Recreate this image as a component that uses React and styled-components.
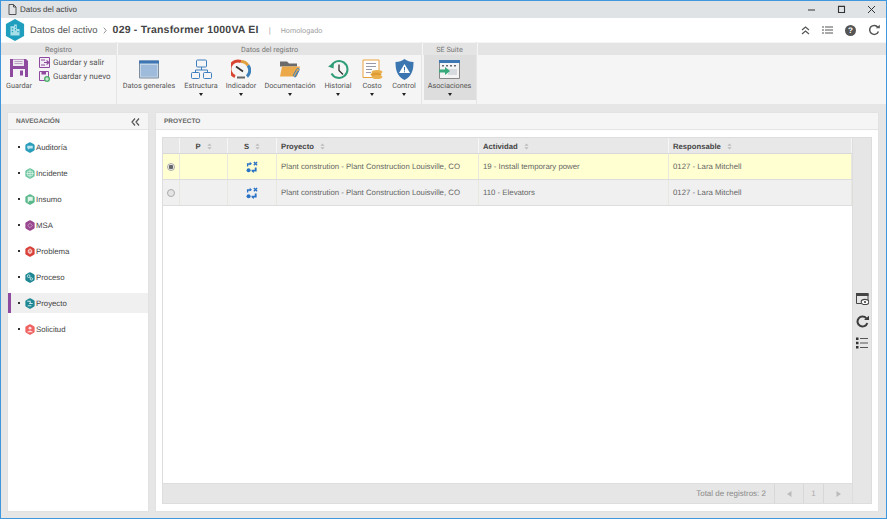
import React from 'react';
import styled, { createGlobalStyle } from 'styled-components';

const GlobalStyle = createGlobalStyle`
  html, body {
    margin: 0;
    padding: 0;
    height: 100%;
    overflow: hidden;
  }
  body {
    font-family: "Liberation Sans", Arial, sans-serif;
    text-rendering: geometricPrecision;
  }
  * {
    box-sizing: border-box;
  }
`;

const navItems = [
  { name: 'Auditoría', color: '#2a9dbb', glyph: 'audit' },
  { name: 'Incidente', color: '#6cc6a0', glyph: 'cross' },
  { name: 'Insumo', color: '#5bb98c', glyph: 'bubble' },
  { name: 'MSA', color: '#99478f', glyph: 'dots' },
  { name: 'Problema', color: '#d9403a', glyph: 'alert' },
  { name: 'Proceso', color: '#1f8793', glyph: 'keys' },
  { name: 'Proyecto', color: '#1f8793', glyph: 'steps', active: true },
  { name: 'Solicitud', color: '#ef6463', glyph: 'person' },
];

const rows = [
  { activity: '19 - Install temporary power', selected: true },
  { activity: '110 - Elevators', selected: false },
];

function Sort() {
  return (
    <SortIcon viewBox="0 0 6 8">
      <path d="M3 0.5 L5.5 3 H0.5 Z M3 7.5 L5.5 5 H0.5 Z" fill="#bbbbbb" />
    </SortIcon>
  );
}

function NavGlyph({ color, glyph }) {
  return (
    <svg width="10" height="11" viewBox="0 0 11 12">
      <path d="M5.5 0.3 Q6 0.3 6.5 0.6 L9.8 2.4 Q10.6 2.9 10.6 3.6 V8.4 Q10.6 9.1 9.8 9.6 L6.5 11.4 Q5.5 11.9 4.5 11.4 L1.2 9.6 Q0.4 9.1 0.4 8.4 V3.6 Q0.4 2.9 1.2 2.4 L4.5 0.6 Q5 0.3 5.5 0.3 Z" fill={color} />
      {glyph === 'audit' && <path d="M2.5 4 H8.5 V7 H5 L3.5 8.5 V7 H2.5 Z" fill="#bfe6f0" />}
      {glyph === 'cross' && <path d="M5.5 1.5 V10.5 M1.5 6 H9.5 M3 3.5 H8 V8.5 H3 Z" stroke="#e7f7ef" fill="none" strokeWidth="0.8" />}
      {glyph === 'bubble' && <path d="M3 3 H8.5 V7.5 H5 L3 9.5 Z" fill="#dff5ea" />}
      {glyph === 'dots' && <path d="M3 6 L5.5 3.5 L8 6 L5.5 8.5 Z" stroke="#d9b7d5" fill="none" strokeWidth="0.8" />}
      {glyph === 'alert' && <path d="M5.5 2.5 L8 4.5 V7 L5.5 9 L3 7 V4.5 Z M5 4 V6.5 H6 V4 Z" fill="#f4c4c1" fillRule="evenodd" />}
      {glyph === 'keys' && (
        <g stroke="#d4eef0" fill="none" strokeWidth="0.9">
          <circle cx="4" cy="4.5" r="1.5" />
          <circle cx="7" cy="7.5" r="1.3" />
          <path d="M5 5.5 L6 6.5" />
        </g>
      )}
      {glyph === 'steps' && <path d="M2.5 3.5 H6.5 M4.5 6 H8.5 M3 8.5 H7 M5 3.5 L6.5 6" stroke="#d4eef0" fill="none" strokeWidth="1" />}
      {glyph === 'person' && (
        <g fill="#ffdcdc">
          <circle cx="5.5" cy="4.5" r="1.6" />
          <path d="M2.5 9 C3 6.8 8 6.8 8.5 9 Z" />
        </g>
      )}
    </svg>
  );
}

function ProjectStatus() {
  return (
    <svg width="12" height="12" viewBox="0 0 13 13">
      <g fill="#2a72c6">
        <path d="M1 6 V2.5 H4 V0.8 L6.5 3 L4 5 V4 H2.5 V6 Z" />
        <circle cx="2.8" cy="10" r="2.2" />
        <path d="M6 9.5 H9.5 V7 H11.5 V11.5 H8.5 V13 L6 11 Z" />
      </g>
      <path d="M8.5 1 L12 4.5 M12 1 L8.5 4.5" stroke="#2a72c6" strokeWidth="1.5" />
    </svg>
  );
}

const Caret = () => <CaretMark />;

export default function App() {
  return (
    <Frame>
      <GlobalStyle />
      <TitleBar>
        <TitleLeft>
          <svg width="9" height="11" viewBox="0 0 9 11">
            <path d="M1 .5 H5.5 L8 3 V10.5 H1 Z M5.5 .5 V3 H8" fill="none" stroke="#444" strokeWidth="0.9" />
          </svg>
          <TitleText>Datos del activo</TitleText>
        </TitleLeft>
        <WindowButtons>
          <svg width="9" height="9" viewBox="0 0 9 9"><path d="M1 5 H8" stroke="#333" strokeWidth="1" /></svg>
          <svg width="9" height="9" viewBox="0 0 9 9"><path d="M1.5 1.5 H7.5 V7.5 H1.5 Z M1 1.2 H8" fill="none" stroke="#333" strokeWidth="1.1" /></svg>
          <svg width="9" height="9" viewBox="0 0 9 9"><path d="M1 1 L8 8 M8 1 L1 8" stroke="#333" strokeWidth="1" /></svg>
        </WindowButtons>
      </TitleBar>

      <Header>
        <Logo>
          <svg width="20" height="22" viewBox="0 0 22 24">
            <path d="M11 0 L21 5.5 V18.5 L11 24 L1 18.5 V5.5 Z" fill="#1f9fbd" />
            <path d="M6 18 V8 H10 V6 H13 V11 H16 V18 Z" fill="#a9dfe9" />
            <path d="M7.5 10 H9 V11.5 H7.5 Z M7.5 13 H9 V14.5 H7.5 Z M11 8 H12 V9.5 H11 Z M11 11 H12 V12.5 H11 Z M13.5 13 H15 V14.5 H13.5 Z" fill="#1f9fbd" />
          </svg>
        </Logo>
        <Crumb>Datos del activo</Crumb>
        <Chevron viewBox="0 0 5 8" width="4" height="7">
          <path d="M1 .5 L4 4 L1 7.5" fill="none" stroke="#777" strokeWidth="1" />
        </Chevron>
        <RecordTitle>029 - Transformer 1000VA EI</RecordTitle>
        <Divider>|</Divider>
        <Status>Homologado</Status>
        <HeaderTools>
          <svg width="9" height="9" viewBox="0 0 9 9">
            <path d="M1 4 L4.5 1 L8 4 M1 8 L4.5 5 L8 8" fill="none" stroke="#555" strokeWidth="1.2" />
          </svg>
          <svg width="11" height="8" viewBox="0 0 11 8">
            <path d="M3 1 H11 M3 4 H11 M3 7 H11" stroke="#555" strokeWidth="1" />
            <path d="M0 1 H2 M0 4 H2 M0 7 H2" stroke="#555" strokeWidth="1.2" />
          </svg>
          <HelpBadge>?</HelpBadge>
          <svg width="12" height="12" viewBox="0 0 12 12">
            <path d="M9.8 3.2 A4.5 4.5 0 1 0 10.4 7.5" fill="none" stroke="#555" strokeWidth="1.5" />
            <path d="M7.8 4.2 H11.8 V0.8 Z" fill="#555" />
          </svg>
        </HeaderTools>
      </Header>

      <Ribbon>
        <RibbonGroup $width={115}>
          <GroupTitle>Registro</GroupTitle>
          <RegistroBody>
            <SaveButton>
              <svg width="20" height="20" viewBox="0 0 20 20">
                <path d="M1 1 H17 L19 3 V19 H1 Z" fill="#8e4a9e" />
                <path d="M4 1.5 H15 V8 H4 Z" fill="#ece6ee" />
                <path d="M5.5 3.5 H13.5 M5.5 5.5 H13.5" stroke="#b9a0c2" strokeWidth="1" />
                <path d="M4 11 H16 V19 H4 Z" fill="#f5f2f6" />
                <path d="M11 12.5 H14 V17.5 H11 Z" fill="#8e4a9e" />
              </svg>
              <RibbonLabel>Guardar</RibbonLabel>
            </SaveButton>
            <SaveOptions>
              <SaveOption>
                <svg width="11" height="11" viewBox="0 0 11 11">
                  <path d="M.5 .5 H10.5 V10.5 H.5 Z" fill="#f3eef5" stroke="#8e4a9e" />
                  <path d="M2 3 H6 M5 5.5 H10 M7.5 3.5 L10 5.5 L7.5 7.5 M2 8 H6" fill="none" stroke="#8e4a9e" strokeWidth="1.1" />
                </svg>
                <RibbonLabel $size={8}>Guardar y salir</RibbonLabel>
              </SaveOption>
              <SaveOption>
                <svg width="11" height="11" viewBox="0 0 11 11">
                  <path d="M.5 .5 H9.5 V9.5 H.5 Z" fill="#f3eef5" stroke="#8e4a9e" />
                  <path d="M2.5 .5 H7 V3.5 H2.5 Z" fill="#8e4a9e" />
                  <circle cx="8" cy="8" r="3" fill="#4caf6a" />
                  <path d="M8 6.2 V9.8 M6.2 8 H9.8" stroke="#fff" strokeWidth="0.9" />
                </svg>
                <RibbonLabel $size={8}>Guardar y nuevo</RibbonLabel>
              </SaveOption>
            </SaveOptions>
          </RegistroBody>
        </RibbonGroup>

        <RibbonGroup $width={303}>
          <GroupTitle>Datos del registro</GroupTitle>
          <GroupBody>
            <RibbonButton $width={56}>
              <svg width="20" height="18" viewBox="0 0 20 18">
                <path d="M.5 .5 H19.5 V17.5 H.5 Z" fill="#c4d5e8" stroke="#7d8e9e" />
                <path d="M0 0 H20 V3 H0 Z" fill="#3d76b3" />
                <path d="M2 4.5 H18 V16 H2 Z" fill="#9fbbdb" />
              </svg>
              <RibbonLabel>Datos generales</RibbonLabel>
            </RibbonButton>
            <RibbonButton $width={48}>
              <svg width="21" height="20" viewBox="0 0 21 20">
                <g fill="none" stroke="#3d7fc1" strokeWidth="1">
                  <rect x="5.5" y=".5" width="10" height="7" rx="1" />
                  <rect x=".5" y="13" width="8" height="6" rx="1" />
                  <rect x="12.5" y="13" width="8" height="6" rx="1" />
                  <path d="M10.5 7.5 V10.5 M4.5 13 V10.5 H16.5 V13" />
                </g>
              </svg>
              <RibbonLabel>Estructura</RibbonLabel>
              <Caret />
            </RibbonButton>
            <RibbonButton $width={32}>
              <svg width="20" height="20" viewBox="0 0 20 20">
                <path d="M4 17 A8 8 0 0 1 10 2" fill="none" stroke="#d8442f" strokeWidth="3" />
                <path d="M10 2 A8 8 0 0 1 17 6" fill="none" stroke="#e0a040" strokeWidth="3" />
                <path d="M17 6 A8 8 0 0 1 16 17" fill="none" stroke="#3d7fb8" strokeWidth="3" />
                <path d="M5 7 L12 12" stroke="#333" strokeWidth="1.6" />
                <path d="M6 17 H14 V19 H6 Z" fill="#666" />
              </svg>
              <RibbonLabel>Indicador</RibbonLabel>
              <Caret />
            </RibbonButton>
            <RibbonButton $width={66}>
              <svg width="21" height="20" viewBox="0 0 21 20">
                <path d="M0 2 H7 L9 4 H17 V7 H0 Z" fill="#6b6b6b" />
                <path d="M0 17 L2 7 H20 L17 17 Z" fill="#eba94a" />
                <path d="M15 18 L19 11 C20 9 17.5 8 16.5 10 L13.5 15.5 C13 17 15 17.5 15.5 16 L18 11.5" fill="none" stroke="#3d7fc1" strokeWidth="1" />
              </svg>
              <RibbonLabel>Documentación</RibbonLabel>
              <Caret />
            </RibbonButton>
            <RibbonButton $width={30}>
              <svg width="21" height="20" viewBox="0 0 21 20">
                <path d="M3 7 A8.5 8.5 0 1 1 3.5 14" fill="none" stroke="#2f9e77" strokeWidth="2" />
                <path d="M0 7 L5.5 9 L6 3 Z" fill="#2f9e77" />
                <path d="M11 5 V11 L15 15" fill="none" stroke="#333" strokeWidth="1.3" />
              </svg>
              <RibbonLabel>Historial</RibbonLabel>
              <Caret />
            </RibbonButton>
            <RibbonButton $width={38}>
              <svg width="21" height="20" viewBox="0 0 21 20">
                <path d="M1 .5 H17 V18 H1 Z" fill="#fff" stroke="#e8a23c" />
                <path d="M4 4 H14 M4 7 H14 M4 10 H10 M4 13 H9" stroke="#99a" strokeWidth="1" />
                <ellipse cx="15" cy="12.5" rx="5.5" ry="2" fill="#eab04d" />
                <ellipse cx="14" cy="15" rx="5.5" ry="2" fill="#e09c34" />
                <ellipse cx="15" cy="17.5" rx="5.5" ry="2" fill="#eab04d" />
              </svg>
              <RibbonLabel>Costo</RibbonLabel>
              <Caret />
            </RibbonButton>
            <RibbonButton $width={26}>
              <svg width="19" height="21" viewBox="0 0 19 21">
                <path d="M9.5 0 C12 2 15 3 18.5 3 C18.5 11 17 17 9.5 21 C2 17 .5 11 .5 3 C4 3 7 2 9.5 0 Z" fill="#3c76b0" />
                <path d="M9.5 5 L15 14 H4 Z" fill="#fff" />
                <path d="M9 8 H10 V11.5 H9 Z M9 12.3 H10 V13.3 H9 Z" fill="#3c76b0" />
              </svg>
              <RibbonLabel>Control</RibbonLabel>
              <Caret />
            </RibbonButton>
          </GroupBody>
        </RibbonGroup>

        <RibbonGroup $width={53}>
          <GroupTitle>SE Suite</GroupTitle>
          <SuiteBody>
            <RibbonButton $width={52} $active>
              <svg width="21" height="19" viewBox="0 0 21 19">
                <path d="M.5 .5 H20.5 V18.5 H.5 Z" fill="#f4f4f4" stroke="#888" />
                <path d="M0 0 H21 V3 H0 Z" fill="#3d76b3" />
                <path d="M3 5 H5 V6.5 H3 Z M7 5 H9 V6.5 H7 Z M11 5 H13 V6.5 H11 Z M15 5 H17 V6.5 H15 Z" fill="#667" />
                <path d="M9 9 H18 V15 H9 Z" fill="#d6dbe0" />
                <path d="M0 9.5 H6 V7 L11 11 L6 15 V12.5 H0 Z" fill="#38a97a" />
              </svg>
              <RibbonLabel>Asociaciones</RibbonLabel>
              <Caret />
            </RibbonButton>
          </SuiteBody>
        </RibbonGroup>

        <RibbonFill>
          <GroupTitle />
        </RibbonFill>
      </Ribbon>

      <Workspace>
        <NavPanel>
          <PanelHeader>
            <span>NAVEGACIÓN</span>
            <svg width="9" height="8" viewBox="0 0 9 8">
              <path d="M4 .5 L1 4 L4 7.5 M8 .5 L5 4 L8 7.5" fill="none" stroke="#555" strokeWidth="1.2" />
            </svg>
          </PanelHeader>
          <NavList>
            {navItems.map((item) => (
              <NavItem key={item.name} $active={item.active}>
                <Bullet />
                <NavGlyph color={item.color} glyph={item.glyph} />
                <NavLabel>{item.name}</NavLabel>
              </NavItem>
            ))}
          </NavList>
        </NavPanel>

        <MainPanel>
          <PanelHeader>
            <span>PROYECTO</span>
          </PanelHeader>
          <GridWrap>
            <GridArea>
              <Table>
                <HeadRow>
                  <HeadCell $width={17} />
                  <HeadCell $width={48} $center>P<Sort /></HeadCell>
                  <HeadCell $width={49} $center>S<Sort /></HeadCell>
                  <HeadCell $width={202}>Proyecto<Sort /></HeadCell>
                  <HeadCell $width={190}>Actividad<Sort /></HeadCell>
                  <HeadCell $flex>Responsable<Sort /></HeadCell>
                </HeadRow>
                {rows.map((row) => (
                  <DataRow key={row.activity} $selected={row.selected}>
                    <Cell $width={17} $center><Radio $checked={row.selected} /></Cell>
                    <Cell $width={48} />
                    <Cell $width={49} $center><ProjectStatus /></Cell>
                    <Cell $width={202}>Plant constrution - Plant Construction Louisville, CO</Cell>
                    <Cell $width={190}>{row.activity}</Cell>
                    <Cell $flex>0127 - Lara Mitchell</Cell>
                  </DataRow>
                ))}
              </Table>
              <Footer>
                <Total>Total de registros: 2</Total>
                <Pager>
                  <svg width="5" height="6" viewBox="0 0 5 6"><path d="M4.5 0 V6 L0 3 Z" fill="#bbb" /></svg>
                </Pager>
                <Pager $narrow>1</Pager>
                <Pager>
                  <svg width="5" height="6" viewBox="0 0 5 6"><path d="M.5 0 V6 L5 3 Z" fill="#bbb" /></svg>
                </Pager>
              </Footer>
            </GridArea>
            <SideTools>
              <svg width="13" height="12" viewBox="0 0 13 12">
                <path d="M.5 .5 H12 V8 M.5 .5 V10.5 H5" fill="none" stroke="#444" strokeWidth="1" />
                <path d="M0 0 H12.5 V3 H0 Z" fill="#444" />
                <ellipse cx="9" cy="9" rx="3.8" ry="2.6" fill="#fff" stroke="#444" strokeWidth="1.1" />
                <circle cx="9" cy="9" r="1.1" fill="#444" />
              </svg>
              <svg width="13" height="13" viewBox="0 0 13 13">
                <path d="M10.4 3.4 A5 5 0 1 0 11.3 8" fill="none" stroke="#3c3c3c" strokeWidth="2" />
                <path d="M8 5 H13 V0.8 Z" fill="#3c3c3c" />
              </svg>
              <svg width="12" height="12" viewBox="0 0 12 12">
                <path d="M4 1.5 H12 M4 6 H12 M4 10.5 H12" stroke="#555" strokeWidth="1" />
                <path d="M0 .5 H2.5 V3 H0 Z M0 4.8 H2.5 V7.3 H0 Z M0 9 H2.5 V11.5 H0 Z" fill="#333" />
              </svg>
            </SideTools>
          </GridWrap>
        </MainPanel>
      </Workspace>
    </Frame>
  );
}

const Frame = styled.div`
  width: 887px;
  height: 519px;
  display: flex;
  flex-direction: column;
  border: 1px solid #3f97de;
  background: #e6e6e6;
  overflow: hidden;
`;

const TitleBar = styled.div`
  height: 17px;
  flex: none;
  display: flex;
  align-items: center;
  justify-content: space-between;
  padding-left: 7px;
  background: #dfe3e6;
`;

const TitleLeft = styled.div`
  display: flex;
  align-items: center;
  gap: 3px;
`;

const TitleText = styled.span`
  font-size: 8px;
  color: #3a3a3a;
`;

const WindowButtons = styled.div`
  display: flex;
  align-items: center;
  gap: 21px;
  padding-right: 10px;
`;

const Header = styled.div`
  height: 24px;
  flex: none;
  display: flex;
  align-items: center;
  padding-left: 4px;
  background: #ffffff;
`;

const Logo = styled.div`
  width: 25px;
  display: flex;
`;

const Crumb = styled.span`
  font-size: 9.5px;
  color: #555555;
`;

const Chevron = styled.svg`
  margin: 0 6px 0 5px;
`;

const RecordTitle = styled.span`
  font-size: 10.5px;
  font-weight: bold;
  letter-spacing: 0.2px;
  color: #444444;
`;

const Divider = styled.span`
  margin: 0 10px;
  font-size: 8px;
  color: #aaaaaa;
`;

const Status = styled.span`
  font-family: Roboto, sans-serif;
  font-size: 7.2px;
  color: #a0a0a0;
`;

const HeaderTools = styled.div`
  margin-left: auto;
  display: flex;
  align-items: center;
  gap: 12px;
  padding-right: 6px;
`;

const HelpBadge = styled.span`
  width: 11px;
  height: 11px;
  display: flex;
  align-items: center;
  justify-content: center;
  border-radius: 50%;
  background: #555555;
  color: #ffffff;
  font-size: 8px;
  font-weight: bold;
`;

const Ribbon = styled.div`
  height: 62px;
  flex: none;
  display: flex;
  gap: 2px;
  background: #f5f5f5;
`;

const RibbonGroup = styled.div`
  width: ${(p) => p.$width}px;
  flex: none;
  display: flex;
  flex-direction: column;
  height: 100%;
  box-shadow: 1px 0 0 #e6e6e6;
`;

const RibbonFill = styled.div`
  flex: 1;
`;

const GroupTitle = styled.div`
  height: 12px;
  margin-top: 1px;
  display: flex;
  align-items: center;
  justify-content: center;
  background: #e4e4e4;
  font-family: Roboto, sans-serif;
  font-size: 7.3px;
  color: #777777;
`;

const GroupBody = styled.div`
  display: flex;
  padding: 2px 0 0 3px;
`;

const RegistroBody = styled.div`
  display: flex;
  padding: 1px 0 0 3px;
`;

const SuiteBody = styled.div`
  display: flex;
  justify-content: center;
`;

const SaveButton = styled.div`
  display: flex;
  flex-direction: column;
  align-items: center;
  gap: 2px;
  padding-top: 2px;
  width: 30px;
`;

const SaveOptions = styled.div`
  display: flex;
  flex-direction: column;
  gap: 2px;
  margin-left: 5px;
`;

const SaveOption = styled.div`
  display: flex;
  align-items: center;
  gap: 3px;
  height: 12px;
`;

const RibbonButton = styled.div`
  width: ${(p) => p.$width}px;
  height: 45px;
  display: flex;
  flex-direction: column;
  align-items: center;
  padding-top: ${(p) => (p.$active ? '4px' : '2px')};
  background: ${(p) => (p.$active ? '#dddddd' : 'transparent')};

  > svg {
    height: 21px;
    flex: none;
  }
`;

const RibbonLabel = styled.span`
  font-family: Roboto, sans-serif;
  font-size: ${(p) => p.$size || 7.3}px;
  line-height: 11px;
  color: #555555;
  white-space: nowrap;
`;

const CaretMark = styled.span`
  margin-top: 2px;
  border-left: 2px solid transparent;
  border-right: 2px solid transparent;
  border-top: 3px solid #222222;
`;

const Workspace = styled.div`
  flex: 1;
  min-height: 0;
  display: flex;
  gap: 8px;
  padding: 9px 8px 7px 7px;
`;

const NavPanel = styled.div`
  width: 140px;
  flex: none;
  background: #ffffff;
  box-shadow: 0 0 1px #cccccc;
`;

const PanelHeader = styled.div`
  height: 17px;
  display: flex;
  align-items: center;
  justify-content: space-between;
  padding: 1px 8px 0;
  background: #f5f5f5;
  border-bottom: 1px solid #e4e4e4;
  font-size: 6.5px;
  font-weight: bold;
  color: #666666;
`;

const NavList = styled.div`
  display: flex;
  flex-direction: column;
  padding-top: 7px;
`;

const NavItem = styled.div`
  height: 20px;
  margin-bottom: 6px;
  display: flex;
  align-items: center;
  padding-left: ${(p) => (p.$active ? '7px' : '10px')};
  border-left: ${(p) => (p.$active ? '3px solid #8e4a9e' : 'none')};
  background: ${(p) => (p.$active ? '#f0f0f0' : 'transparent')};
`;

const Bullet = styled.span`
  width: 2px;
  height: 2px;
  margin-right: 5px;
  background: #333333;
`;

const NavLabel = styled.span`
  margin-left: 1px;
  font-size: 7.8px;
  color: #444444;
`;

const MainPanel = styled.div`
  flex: 1;
  min-width: 0;
  display: flex;
  flex-direction: column;
  background: #ffffff;
  box-shadow: 0 0 1px #cccccc;
`;

const GridWrap = styled.div`
  flex: 1;
  min-height: 0;
  display: flex;
  margin: 7px 6px 7px 6px;
  border: 1px solid #dddddd;
`;

const GridArea = styled.div`
  flex: 1;
  min-width: 0;
  display: flex;
  flex-direction: column;
`;

const Table = styled.div`
  flex: 1;
  min-height: 0;
`;

const HeadRow = styled.div`
  height: 16px;
  display: flex;
  background: #e8e8e8;
  border-bottom: 1px solid #d8d8d8;
`;

const HeadCell = styled.div`
  width: ${(p) => (p.$flex ? 'auto' : `${p.$width}px`)};
  flex: ${(p) => (p.$flex ? '1' : 'none')};
  display: flex;
  align-items: center;
  justify-content: ${(p) => (p.$center ? 'center' : 'flex-start')};
  gap: 6px;
  padding: ${(p) => (p.$center ? '1px 0 0' : '1px 4px 0')};
  border-right: 1px solid #f6f6f6;
  font-size: 7.7px;
  font-weight: bold;
  color: #444444;
`;

const SortIcon = styled.svg`
  width: 5px;
  height: 7px;
`;

const DataRow = styled.div`
  height: 26px;
  display: flex;
  background: ${(p) => (p.$selected ? '#ffffd2' : '#f0f0f0')};
  border-bottom: 1px solid #dddddd;
`;

const Cell = styled.div`
  width: ${(p) => (p.$flex ? 'auto' : `${p.$width}px`)};
  flex: ${(p) => (p.$flex ? '1' : 'none')};
  display: flex;
  align-items: center;
  justify-content: ${(p) => (p.$center ? 'center' : 'flex-start')};
  padding: ${(p) => (p.$center ? '0' : '0 4px')};
  border-right: 1px solid #e8e8e0;
  font-size: 7.8px;
  color: #666666;
  white-space: nowrap;
`;

const Radio = styled.span`
  width: 8px;
  height: 8px;
  border-radius: 50%;
  border: 1px solid #aaaaaa;
  background: ${(p) =>
    p.$checked ? 'radial-gradient(circle, #666 0 2px, #f0f0f0 2.5px)' : '#e4e4e4'};
`;

const Footer = styled.div`
  height: 20px;
  flex: none;
  display: flex;
  align-items: stretch;
  justify-content: flex-end;
  background: #e6e6e6;
  border-top: 1px solid #dddddd;
`;

const Total = styled.div`
  display: flex;
  align-items: center;
  padding-right: 8px;
  font-size: 8px;
  color: #888888;
`;

const Pager = styled.div`
  width: ${(p) => (p.$narrow ? '20px' : '29px')};
  display: flex;
  align-items: center;
  justify-content: center;
  border-left: 1px solid #d8d8d8;
  font-size: 8px;
  color: #aaaaaa;
`;

const SideTools = styled.div`
  width: 19px;
  flex: none;
  display: flex;
  flex-direction: column;
  align-items: center;
  gap: 9.5px;
  padding-top: 155px;
  background: #e6e6e6;
  border-left: 1px solid #dddddd;
`;
